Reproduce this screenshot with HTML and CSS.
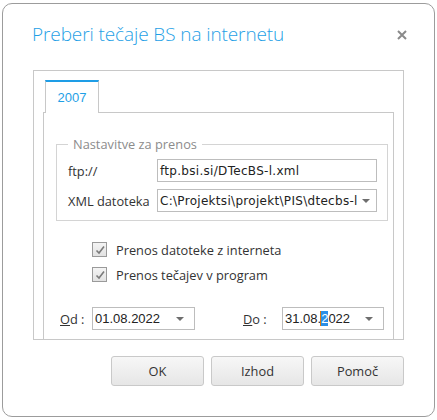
FILE: index.html
```html
<!DOCTYPE html>
<html lang="sl">
<head>
<meta charset="utf-8">
<title>Preberi tečaje BS na internetu</title>
<link rel="stylesheet" href="styles.css">
</head>
<body>
<div class="dialog">
  <div class="titlebar">
    <span class="title">Preberi tečaje BS na internetu</span>
    <svg class="close" width="10" height="10" viewBox="0 0 10 10"><path d="M1 1 L9 9 M9 1 L1 9" stroke="#8a8a8a" stroke-width="2" fill="none"/></svg>
  </div>
  <div class="outer">
    <div class="tabs"><div class="tab">2007</div></div>
    <div class="page">
      <fieldset class="group">
        <legend>Nastavitve za prenos</legend>
        <div class="row">
          <span class="lbl">ftp://</span>
          <div class="input">ftp.bsi.si/DTecBS-l.xml</div>
        </div>
        <div class="row">
          <span class="lbl">XML datoteka</span>
          <div class="input combo"><span class="val">C:\Projektsi\projekt\PIS\dtecbs-l</span><span class="arrow"></span></div>
        </div>
      </fieldset>
      <div class="checks">
        <label class="check"><span class="box"><svg width="12" height="12" viewBox="0 0 12 12"><path d="M2.5 6.5 L5 9 L10 2.5" stroke="#7a7a7a" stroke-width="1.6" fill="none"/></svg></span>Prenos datoteke z interneta</label>
        <label class="check"><span class="box"><svg width="12" height="12" viewBox="0 0 12 12"><path d="M2.5 6.5 L5 9 L10 2.5" stroke="#7a7a7a" stroke-width="1.6" fill="none"/></svg></span>Prenos tečajev v program</label>
      </div>
      <div class="dates">
        <span class="dlbl od"><u>O</u>d :</span>
        <div class="input date d1"><span class="val">01.08.2022</span><span class="arrow"></span></div>
        <span class="dlbl do"><u>D</u>o :</span>
        <div class="input date d2"><span class="val">31.08.<span class="sel">2</span>022</span><span class="arrow"></span></div>
      </div>
    </div>
  </div>
  <div class="buttons">
    <button class="btn">OK</button>
    <button class="btn">Izhod</button>
    <button class="btn">Pomoč</button>
  </div>
</div>
</body>
</html>
```
FILE: styles.css
```css
html, body {
  margin: 0;
  padding: 0;
  background: #ffffff;
}
body {
  font-family: "Open Sans", "Noto Sans", sans-serif;
  font-size: 12.8px;
  color: #333333;
}
.dialog {
  box-sizing: border-box;
  margin: 3px 0 0 2px;
  width: 433px;
  height: 414px;
  border: 1px solid #9c9c9c;
  border-radius: 10px;
  display: flex;
  flex-direction: column;
}
.titlebar {
  height: 66px;
  display: flex;
  align-items: center;
  padding: 0 27px 0 29px;
  box-sizing: border-box;
}
.title {
  flex: 1;
  font-family: "Open Sans", sans-serif;
  font-size: 19px;
  font-weight: 300;
  color: #1f9fe6;
  letter-spacing: -0.1px;
  margin-top: -6px;
}
.close {
  margin-top: -4px;
}
.outer {
  box-sizing: border-box;
  margin: 0 30px;
  height: 270px;
  border: 1px solid #c8c8c8;
  padding: 9px 9px 0 9px;
  display: flex;
  flex-direction: column;
}
.tabs {
  display: flex;
  padding-left: 2px;
}
.tab {
  position: relative;
  z-index: 1;
  box-sizing: border-box;
  width: 54px;
  height: 33px;
  margin-bottom: -1px;
  background: #fff;
  border: 1px solid #c8c8c8;
  border-top: 2px solid #1e9de6;
  border-bottom: none;
  color: #1f9fe6;
  font-family: "Liberation Sans", Arial, sans-serif;
  font-size: 13px;
  display: flex;
  align-items: center;
  justify-content: center;
  padding-bottom: 1px;
}
.page {
  flex: 1;
  border: 1px solid #c8c8c8;
  border-bottom: none;
  padding: 0 5px 0 12px;
  display: flex;
  flex-direction: column;
}
.group {
  margin: 23px 0 0 0;
  padding: 0 10px 8px 11px;
  border: 1px solid #d4d4d4;
  min-width: 0;
}
.group legend {
  padding: 0 5px;
  line-height: 16px;
  color: #8c8c8c;
  font-size: 12.8px;
}
.row {
  display: flex;
  align-items: center;
  margin-top: 7px;
}
.lbl {
  width: 89px;
  flex: none;
  color: #333;
}
.input {
  box-sizing: border-box;
  flex: 1;
  height: 23px;
  border: 1px solid #bdbdbd;
  background: #fff;
  display: flex;
  align-items: center;
  padding: 0 6px 0 2px;
  color: #222;
  font-family: "DejaVu Sans", sans-serif;
  font-size: 12px;
  letter-spacing: 0.3px;
  white-space: nowrap;
  overflow: hidden;
}
.input .val {
  flex: 1;
  overflow: hidden;
}
.arrow {
  width: 0;
  height: 0;
  border-left: 4px solid transparent;
  border-right: 4px solid transparent;
  border-top: 4px solid #6e6e6e;
  flex: none;
}
.checks {
  display: flex;
  flex-direction: column;
  gap: 2px;
  margin-top: 17px;
  padding-left: 36px;
}
.check {
  display: flex;
  align-items: center;
  height: 23px;
  gap: 9px;
  color: #333;
}
.box {
  box-sizing: border-box;
  width: 15px;
  height: 15px;
  border: 1px solid #9a9a9a;
  background: linear-gradient(#f4f4f4, #e2e2e2);
  display: flex;
  align-items: center;
  justify-content: center;
}
.dates {
  display: flex;
  align-items: center;
  margin-top: 21px;
  padding-left: 4px;
}
.dlbl {
  color: #333;
  flex: none;
}
.dlbl.od {
  width: 32px;
}
.dlbl.do {
  width: 39px;
  margin-left: 48px;
}
.date {
  flex: none;
  font-family: "Liberation Sans", Arial, sans-serif;
  font-size: 13px;
  letter-spacing: 0;
  padding: 0 10px 0 2px;
}
.d1 {
  width: 103px;
}
.d2 {
  width: 102px;
}
.sel {
  background: #2b8fe8;
  color: #fff;
  box-shadow: -1px 0 0 #e07a10;
}
.buttons {
  display: flex;
  justify-content: flex-end;
  gap: 7px;
  margin: 16px 30px 0 0;
}
.btn {
  box-sizing: border-box;
  width: 93px;
  height: 30px;
  border: 1px solid #c9c9c9;
  border-radius: 3px;
  background: linear-gradient(#f7f7f7, #e6e6e6);
  font-family: "Open Sans", sans-serif;
  font-size: 12.8px;
  color: #333;
  padding: 0;
}
```
